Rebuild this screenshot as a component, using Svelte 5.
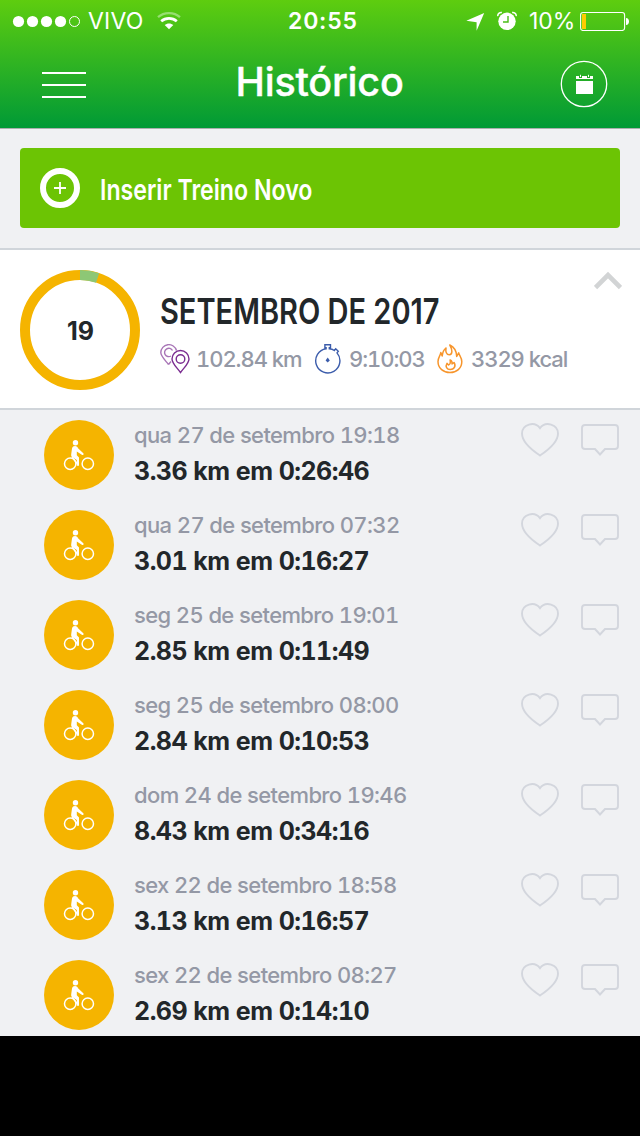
<script>
  const workouts = [
    { date: 'qua 27 de setembro 19:18', result: '3.36 km em 0:26:46' },
    { date: 'qua 27 de setembro 07:32', result: '3.01 km em 0:16:27' },
    { date: 'seg 25 de setembro 19:01', result: '2.85 km em 0:11:49' },
    { date: 'seg 25 de setembro 08:00', result: '2.84 km em 0:10:53' },
    { date: 'dom 24 de setembro 19:46', result: '8.43 km em 0:34:16' },
    { date: 'sex 22 de setembro 18:58', result: '3.13 km em 0:16:57' },
    { date: 'sex 22 de setembro 08:27', result: '2.69 km em 0:14:10' },
  ];
</script>

<div class="screen">
  <header class="header">
    <div class="status">
      <svg class="signal" width="70" height="16" viewBox="0 0 70 16">
        {#each [6.5, 20.5, 34.5, 48.5] as cx}
          <circle {cx} cy="8.5" r="5.6" fill="#fff" />
        {/each}
        <circle cx="62.5" cy="8.5" r="5" fill="none" stroke="#fff" />
      </svg>
      <span class="carrier">VIVO</span>
      <svg class="wifi" width="26" height="20" viewBox="0 0 26 20" fill="none" stroke="#fff">
        <path d="M2 6.2C8 .7 18 .7 24 6.2" stroke-width="2.3" opacity=".4" />
        <path d="M5.2 10.2C9.6 6.4 16.4 6.4 20.8 10.2" stroke-width="2.7" />
        <path d="M13 18.3L8.7 14C11 11.9 15 11.9 17.3 14Z" fill="#fff" stroke="none" />
      </svg>
      <span class="clock">20:55</span>
      <svg class="arrow" width="20" height="20" viewBox="0 0 20 20">
        <path d="M18.2 2L10.6 19.8V11.2L.3 9.7Z" fill="#fff" />
      </svg>
      <svg class="alarm" width="20" height="20" viewBox="0 0 20 20">
        <circle cx="10" cy="10.3" r="8.7" fill="#fff" />
        <path d="M.8 5.2C.5 2.8 2.5 1.2 4.9 1.5M19.2 5.2C19.5 2.8 17.5 1.2 15.1 1.5" fill="none" stroke="#fff" stroke-width="1.5" />
        <path d="M11 5V11H6" fill="none" stroke="#4abd17" stroke-width="1.4" />
      </svg>
      <span class="percent">10%</span>
      <svg class="battery" width="50" height="20" viewBox="0 0 50 20">
        <rect x=".6" y="1.5" width="44" height="18" rx="2.5" fill="none" stroke="#fff" stroke-width="1.1" />
        <rect x="2" y="3" width="4" height="15" fill="#fc0" />
        <path d="M46 7C50 7 50 14 46 14Z" fill="#fff" />
      </svg>
    </div>
    <div class="nav">
      <svg class="menu" width="44" height="26" viewBox="0 0 44 26">
        <path d="M0 1H44M0 13H44M0 25H44" stroke="#fff" stroke-width="2" />
      </svg>
      <h1>Histórico</h1>
      <svg width="48" height="48" viewBox="0 0 48 48">
        <circle cx="24" cy="24" r="22.7" fill="none" stroke="#fff" stroke-width="1.3" />
        <path d="M16 16H19V18H22V16H27V18H30V16H33V19H16ZM16 21H33V34H16Z" fill="#fff" />
        <path d="M20.5 14.8V17M28.5 14.8V17" stroke="#fff" />
      </svg>
    </div>
  </header>

  <div class="actions">
    <button class="new-workout">
      <svg width="40" height="40" viewBox="0 0 40 40" fill="none" stroke="#fff">
        <circle cx="20" cy="20" r="17" stroke-width="6" />
        <path d="M14 20H26M20 14V26" stroke-width="1.8" />
      </svg>
      <span>Inserir Treino Novo</span>
    </button>
  </div>

  <section class="month">
    <div class="ring">
      <svg width="120" height="120" viewBox="0 0 120 120" fill="none" stroke-width="10">
        <circle cx="60" cy="60" r="55" stroke="#f5b400" />
        <path d="M60 5A55 55 0 0 1 77.6 7.9" stroke="#8dc775" />
      </svg>
      <span>19</span>
    </div>
    <div class="summary">
      <h2>SETEMBRO DE 2017</h2>
      <div class="stats">
        <svg width="31" height="30" viewBox="0 0 31 30" fill="none" stroke="#7b2d91" stroke-width="1.4">
          <g opacity=".65">
            <path d="M8.5 20.5C4 15 .8 12 .8 8.6A8 8 0 0 1 16.5 6.5M8.5 20.5L11 17.5" />
            <path d="M12.5 6.5A4.2 4.2 0 1 0 11 12" />
          </g>
          <path d="M20.5 28.5C16 22.5 12 19.3 12 15A8.5 8.5 0 0 1 29 15C29 19.3 25 22.5 20.5 28.5Z" />
          <circle cx="20.5" cy="15" r="4.3" />
        </svg>
        <span class="distance">102.84 km</span>
        <svg width="28" height="30" viewBox="0 0 28 30" fill="none" stroke="#3b5cab" stroke-width="1.4">
          <path d="M12.1 4.8V3.8H10.9V.8H16.5V3.8H15.3V4.8C17.5 5 19 5.6 20.3 6.5L21.7 4.8L24.3 7.3L23 8.9A12.1 12.1 0 1 1 12.1 4.8Z" />
          <path d="M13.7 13.5L15.8 16.5L13.7 18.5L11.6 16.5Z" fill="#3b5cab" stroke="none" />
        </svg>
        <span class="time">9:10:03</span>
        <svg width="26" height="30" viewBox="0 0 26 30" fill="none" stroke="#f7952c" stroke-width="1.5" stroke-linejoin="round">
          <path d="M12.8 1C17.5 3.2 19.5 7 19.7 12.4L21.7 8.8C22 11 24.8 13.4 24.8 17.5C24.8 24.5 19.5 28.6 13 28.6S1 24.5 1 17.5C1 13.4 3.4 12 3.8 8.5L5.2 12C5.7 7.5 6.5 5.8 9 4C8.4 7.5 9.4 10.8 12.3 10.8C15.8 10.8 15.5 5.5 12.8 1Z" />
          <path d="M13.1 16C15.2 17 15.2 19 15 20L17 18.5C19.5 22.5 16.8 25.5 13.2 25.5C9.8 25.5 8 22.5 10 19.3L11.5 21C13 20.5 13.5 18 13.1 16Z" />
        </svg>
        <span class="energy">3329 kcal</span>
      </div>
    </div>
    <svg class="chevron" width="28" height="20" viewBox="0 0 28 20">
      <path d="M1.5 16.5L14 4L26.5 16.5" fill="none" stroke="#d2d4d5" stroke-width="4.6" />
    </svg>
  </section>

  <ul class="workouts">
    {#each workouts as workout}
      <li>
        <svg class="bike" width="70" height="70" viewBox="0 0 70 70">
          <circle cx="35" cy="35" r="35" fill="#f5b400" />
          <g fill="none" stroke="#fff" stroke-width="1.5">
            <circle cx="26.2" cy="43.7" r="5.7" />
            <circle cx="43.8" cy="43.7" r="5.7" />
          </g>
          <circle cx="31.5" cy="22.7" r="2.7" fill="#fff" />
          <path d="M28 28.6C28.3 26.7 29.6 26 31 26C32.8 26 33.5 27 34.3 28.6L39.3 33.2C40.2 34.2 39 35.6 37.8 34.8L32.8 31.4V35.2L35 37.4V45.8H32.8V40L28 37C27.1 36.3 27.1 35.5 27.2 34.2Z" fill="#fff" />
          <path d="M28 37L33.5 44" stroke="#fff" stroke-width="1.4" />
        </svg>
        <div class="details">
          <span class="date">{workout.date}</span>
          <strong>{workout.result}</strong>
        </div>
        <svg class="heart" width="40" height="36" viewBox="0 0 40 36" fill="none" stroke="#d3d6dd" stroke-width="1.9">
          <path d="M20 33.5C14 29.5 2 21 2 11.5C2 2.5 14.5 -1.5 20 6.2C25.5 -1.5 38 2.5 38 11.5C38 21 26 29.5 20 33.5Z" />
        </svg>
        <svg class="comment" width="40" height="36" viewBox="0 0 40 36" fill="none" stroke="#d3d6dd" stroke-width="1.9">
          <path d="M5 3H35Q38 3 38 6V24Q38 27 35 27H25L20 32.5L15 27H5Q2 27 2 24V6Q2 3 5 3Z" />
        </svg>
      </li>
    {/each}
  </ul>
</div>

<style>
  :global(body) {
    background: #000;
  }

  .screen {
    display: flex;
    flex-direction: column;
    width: 640px;
    height: 1036px;
    overflow: hidden;
    background: #f0f1f3;
    color: #22272a;
    font-family: Inter, 'Liberation Sans', sans-serif;
    white-space: nowrap;
  }

  svg {
    display: block;
    flex: none;
  }

  h1,
  h2,
  ul {
    margin: 0;
    padding: 0;
  }

  .header {
    flex: none;
    box-sizing: border-box;
    height: 129px;
    border-bottom: 1px solid #aab0ae;
    background: linear-gradient(#5ecd0f, #009a36);
    color: #fff;
  }

  .status {
    display: grid;
    grid-template-columns: 76px 68px 132px 178px 31px 32px 51px 50px;
    align-items: center;
    height: 40px;
    padding-left: 12px;
    font-size: 23px;
    line-height: 42px;
  }

  .clock {
    font-weight: 600;
    letter-spacing: 0.8px;
  }

  .carrier {
    letter-spacing: 0.2px;
  }

  .nav {
    display: flex;
    align-items: center;
    justify-content: space-between;
    height: 88px;
    padding: 0 32px 0 42px;
  }

  .menu {
    margin-top: 2px;
  }

  h1 {
    margin: -4px 0 0 -7px;
    font-size: 39.5px;
    font-weight: 500;
    letter-spacing: -0.2px;
    line-height: 48px;
    -webkit-text-stroke: 0.4px;
  }

  .actions {
    flex: none;
    box-sizing: border-box;
    height: 121px;
    padding: 19px 20px 20px;
    border-bottom: 2px solid #d0d5da;
  }

  .new-workout {
    display: flex;
    align-items: center;
    gap: 20px;
    width: 100%;
    height: 80px;
    padding: 0 20px;
    border: 0;
    border-radius: 4px;
    background: #6cc404;
    color: #fff;
    font: 600 29px/40px Inter, 'Liberation Sans', sans-serif;
  }

  .new-workout span {
    margin-top: 4px;
    transform: scaleX(0.798);
    transform-origin: left;
  }

  .month {
    display: flex;
    flex: none;
    box-sizing: border-box;
    height: 160px;
    padding: 20px 18px 0 20px;
    border-bottom: 2px solid #d0d5da;
    background: #fff;
  }

  .ring {
    display: grid;
    place-items: center;
    width: 120px;
    height: 120px;
    font-size: 25px;
    font-weight: 700;
  }

  .ring > * {
    grid-area: 1 / 1;
  }

  .ring span {
    margin: 2px 0 0 1px;
  }

  .summary {
    width: 428px;
    padding: 20px 0 0 20px;
  }

  h2 {
    font-size: 35.5px;
    font-weight: 600;
    line-height: 44px;
    transform: scaleX(0.817);
    transform-origin: left;
  }

  .stats {
    display: grid;
    grid-template-columns: 36px 118px 35px 88px 34px 100px;
    align-items: center;
    height: 50px;
    color: #9498a5;
    font-size: 22px;
    font-weight: 500;
    font-variant-numeric: tabular-nums;
    letter-spacing: -1.05px;
  }

  .chevron {
    margin: 1px 0 0 6px;
  }

  .workouts {
    list-style: none;
  }

  li {
    display: flex;
    align-items: flex-start;
    box-sizing: border-box;
    height: 90px;
    padding: 10px 20px 0 44px;
    font-variant-numeric: tabular-nums;
  }

  .details {
    display: flex;
    flex-direction: column;
    width: 386px;
    margin-left: 20px;
  }

  .date {
    color: #9498a5;
    font-size: 22px;
    font-weight: 500;
    letter-spacing: -0.62px;
    line-height: 31px;
  }

  strong {
    margin-top: 2px;
    font-size: 25px;
    font-weight: 700;
    letter-spacing: -0.52px;
    line-height: 37px;
  }

  .heart,
  .comment {
    margin-top: 2px;
  }

  .comment {
    margin-left: 20px;
  }
</style>
